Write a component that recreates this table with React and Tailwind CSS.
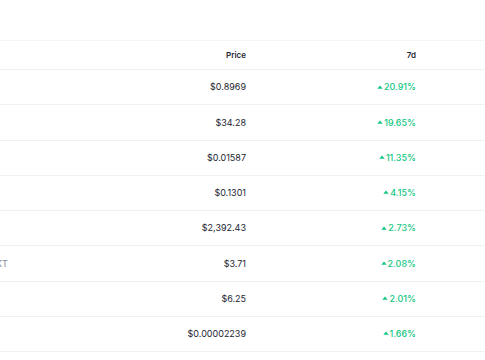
import React from "react";

const rows = [
  { sym: "", price: "$0.8969", ch: "20.91%" },
  { sym: "", price: "$34.28", ch: "19.65%" },
  { sym: "", price: "$0.01587", ch: "11.35%" },
  { sym: "", price: "$0.1301", ch: "4.15%" },
  { sym: "", price: "$2,392.43", ch: "2.73%" },
  { sym: "OKT", price: "$3.71", ch: "2.08%" },
  { sym: "", price: "$6.25", ch: "2.01%" },
  { sym: "", price: "$0.00002239", ch: "1.66%" },
];

function Up() {
  return (
    <svg width="6" height="4" viewBox="0 0 6 4" className="mr-[1px] mb-[1px]">
      <path d="M0.3 3.8 L3 0.4 L5.7 3.8 Z" fill="#16c784" />
    </svg>
  );
}

export default function App() {
  return (
    <div className="w-[485px] h-[360px] bg-white overflow-hidden" style={{ fontFamily: "Inter, 'Liberation Sans', sans-serif" }}>
      <div className="h-[40px]" />
      <div className="border-t border-[#f5f6f8]">
        <div className="flex items-center h-[29px] border-b border-[#eff2f5] text-[8px] font-semibold text-[#222531]">
          <div className="w-[246px] text-right">Price</div>
          <div className="w-[170px] text-right">7d</div>
        </div>
        {rows.map((r, i) => (
          <div key={i} className="flex items-center h-[35.25px] border-b border-[#eff2f5] text-[9px] text-[#222531]">
            <div className="w-[150px] -ml-[11px] text-[#808a9d]">{r.sym}</div>
            <div className="w-[107px] text-right">{r.price}</div>
            <div className="w-[170px] flex items-center justify-end text-[#16c784] font-medium">
              <Up />
              {r.ch}
            </div>
          </div>
        ))}
      </div>
    </div>
  );
}
